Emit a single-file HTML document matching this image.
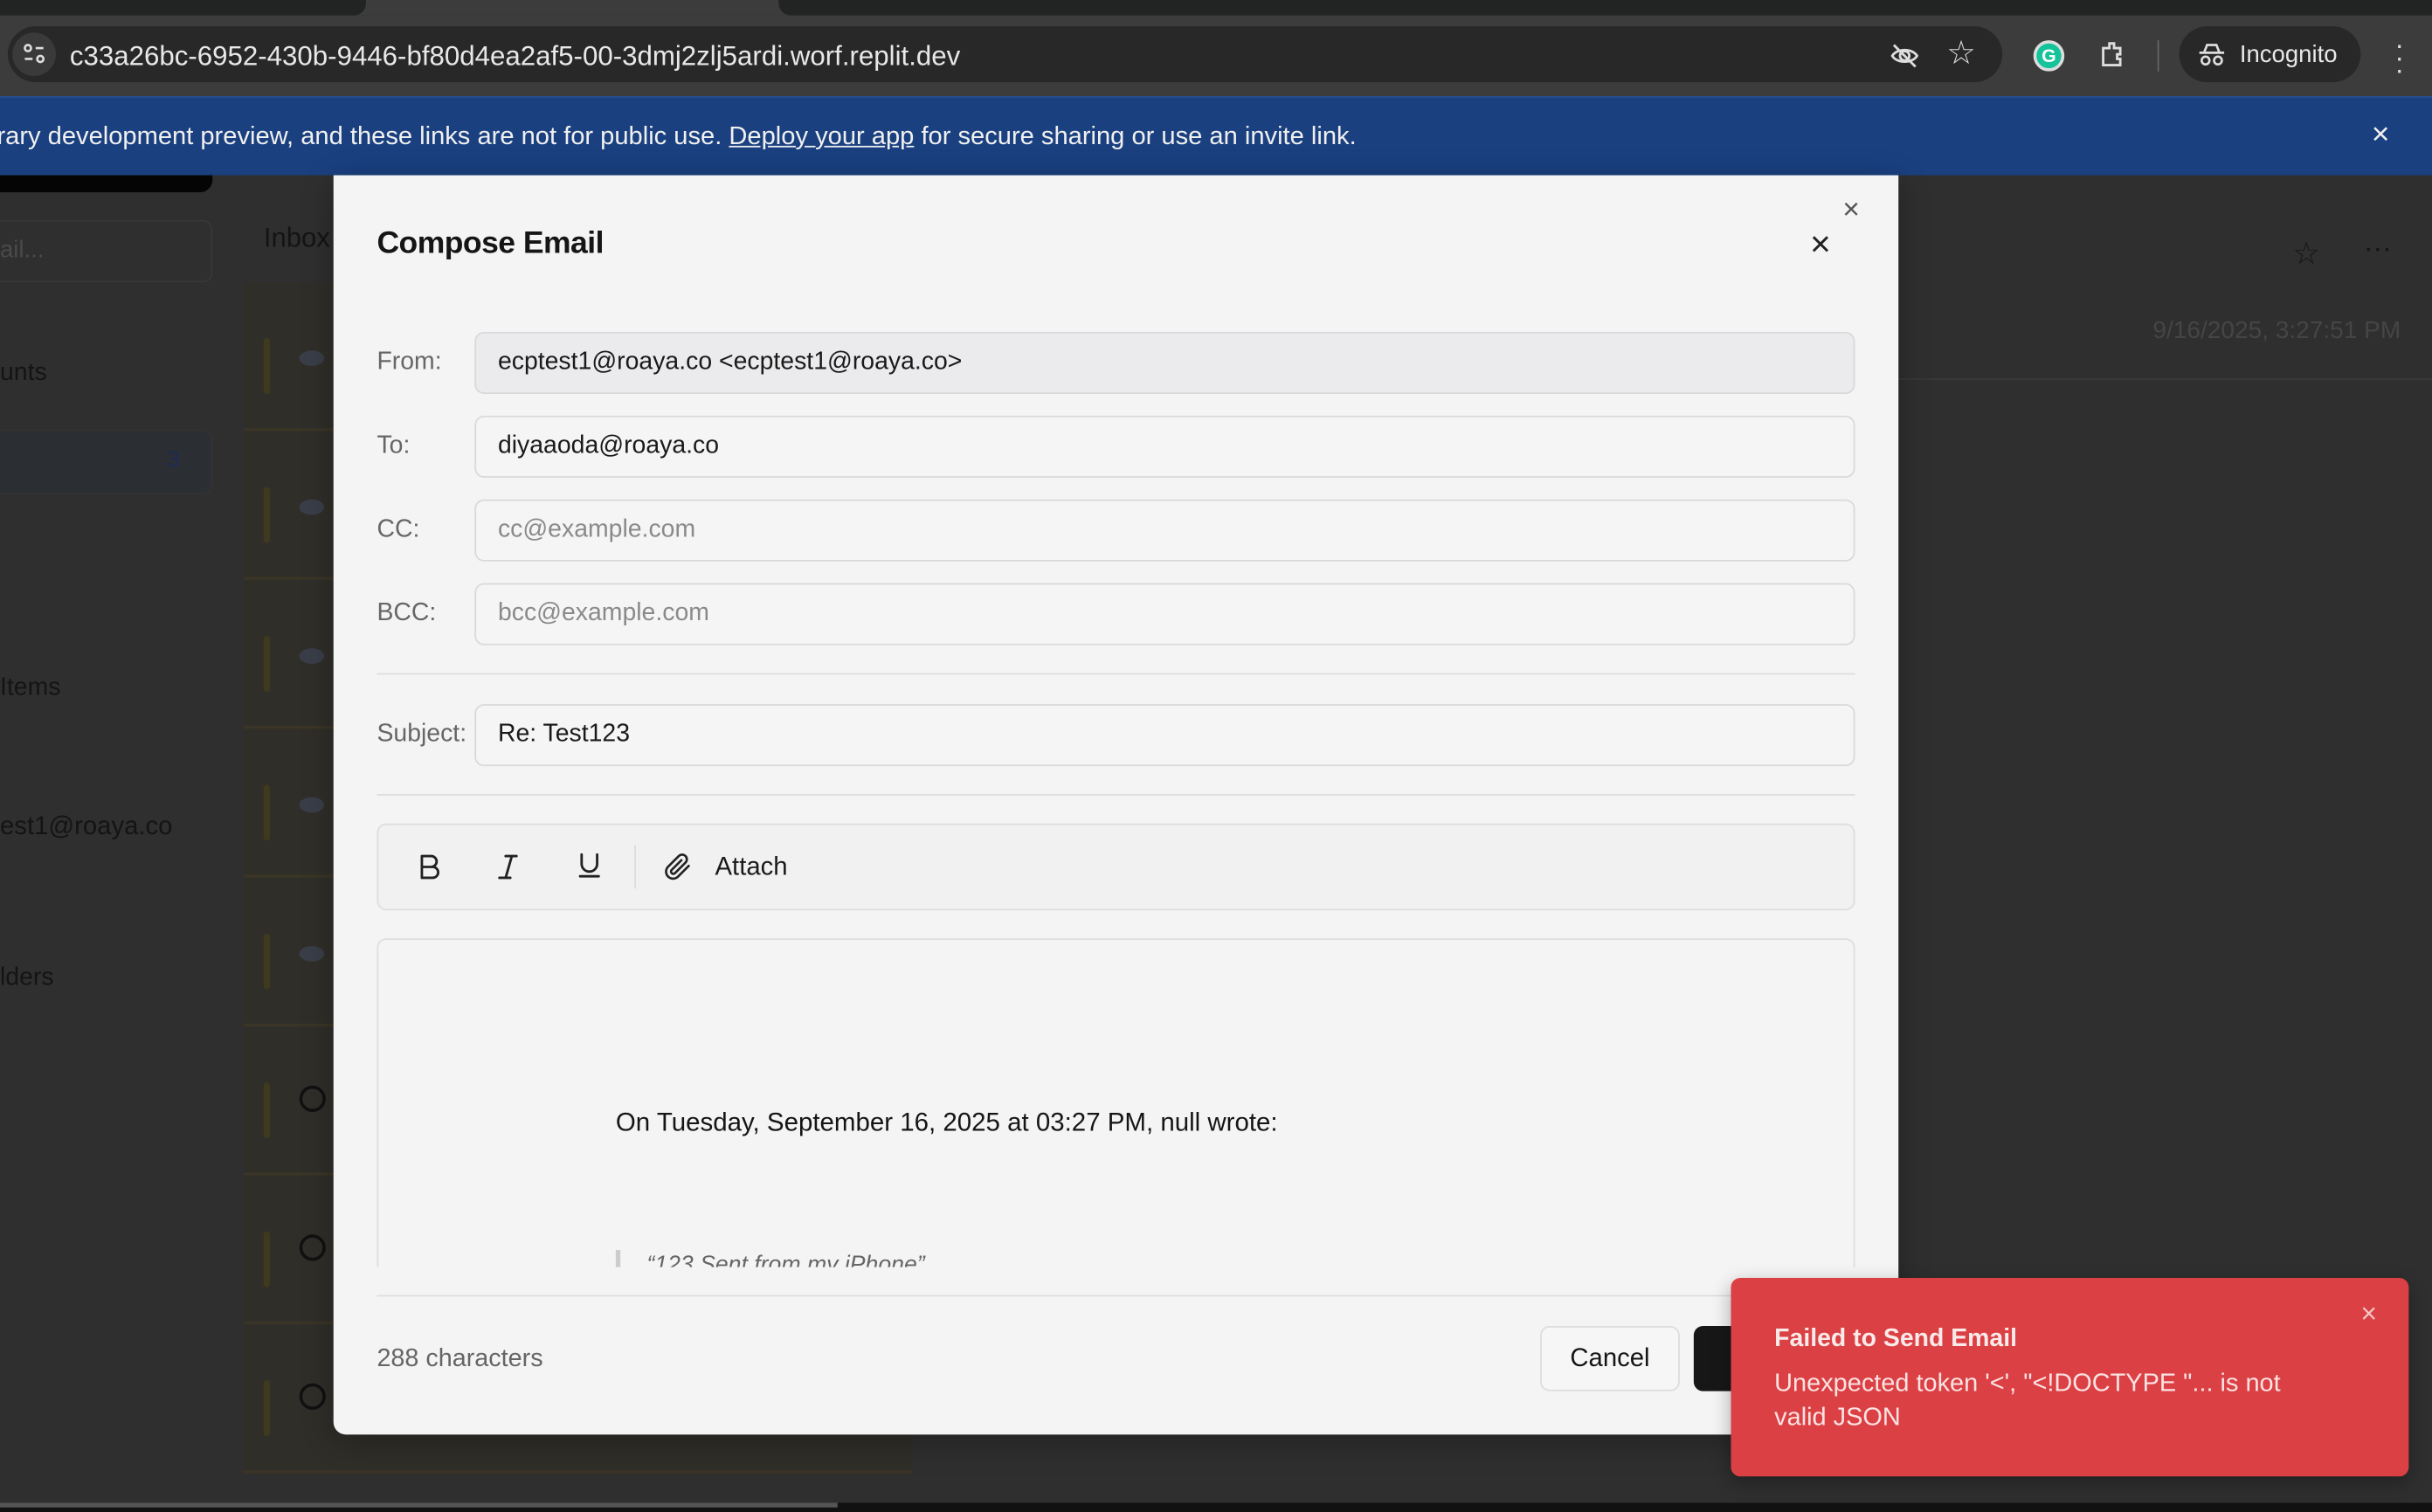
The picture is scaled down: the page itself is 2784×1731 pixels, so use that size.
<!DOCTYPE html>
<html><head><meta charset="utf-8"><style>
*{box-sizing:border-box;margin:0;padding:0}
html,body{width:2784px;height:1730px;overflow:hidden;background:#1e1e1e}
#w{position:absolute;left:0;top:0;width:1568px;height:975px;transform:scale(1.77551);transform-origin:0 0;font-family:"Liberation Sans",sans-serif;background:#2f2f2f;overflow:hidden}
.a{position:absolute}
.inp{position:absolute;left:306px;width:890px;height:40px;border:1px solid #d9d9dc;border-radius:6px;background:#f5f5f5;font-size:16px;color:#1a1a1a;padding:10px 14px}
.lbl{position:absolute;left:243px;font-size:16px;color:#666}
.ph{color:#8a8a8a}
.row{position:absolute;left:157px;width:431px;height:96px;background:#302e29;border-bottom:2px solid #3a3526}
.bar{position:absolute;left:13px;top:36px;width:4px;height:36px;background:#3f3a1e;border-radius:2px}
.dot{position:absolute;left:36px;top:44px;width:16px;height:10px;border-radius:50%;background:#3a3e48}
</style></head><body><div id="w">
<div class="a" style="left:0;top:0;width:1568px;height:10px;background:#3c3c3c"></div>
<div class="a" style="left:0;top:0;width:236px;height:10px;background:#222423;border-radius:0 0 8px 0"></div>
<div class="a" style="left:502px;top:0;width:1066px;height:10px;background:#222423;border-radius:0 0 0 8px"></div>
<div class="a" style="left:0;top:10px;width:1568px;height:52px;background:#3c3c3c"></div>
<div class="a" style="left:5px;top:17px;width:1286px;height:36px;background:#282828;border-radius:18px"></div>
<div class="a" style="left:8px;top:21px;width:28px;height:28px;background:#3a3a3a;border-radius:14px"></div>
<svg class="a" style="left:14px;top:27px" width="16" height="16" viewBox="0 0 16 16" fill="none" stroke="#ddd" stroke-width="1.5"><circle cx="4" cy="4" r="2"/><path d="M9 4h5M2 11h5"/><circle cx="12" cy="11" r="2"/></svg>
<div class="a" style="left:45px;top:26px;font-size:17.6px;color:#e8e8e8">c33a26bc-6952-430b-9446-bf80d4ea2af5-00-3dmj2zlj5ardi.worf.replit.dev</div>
<svg class="a" style="left:1218px;top:26px" width="20" height="20" viewBox="0 0 20 20" fill="none" stroke="#ddd" stroke-width="1.6"><path d="M2 10c3-5 13-5 16 0-3 5-13 5-16 0z"/><circle cx="10" cy="10" r="3"/><path d="M3 3l14 14"/></svg>
<div class="a" style="left:1255px;top:22px;font-size:21px;color:#ddd">☆</div>
<div class="a" style="left:1311px;top:26px;width:20px;height:20px;border-radius:10px;background:#15c39a;border:2px solid #ddd;color:#fff;font-size:12px;font-weight:bold;text-align:center;line-height:16px">G</div>
<svg class="a" style="left:1352px;top:25px" width="20" height="20" viewBox="0 0 20 20" fill="none" stroke="#ddd" stroke-width="1.6"><path d="M4 6h4V3h3v3h4v4h-2v3h2v4H4z"/></svg>
<div class="a" style="left:1391px;top:26px;width:1px;height:20px;background:#666"></div>
<div class="a" style="left:1405px;top:17px;width:117px;height:36px;background:#282828;border-radius:18px"></div>
<svg class="a" style="left:1417px;top:27px" width="18" height="16" viewBox="0 0 18 16" fill="none" stroke="#ddd" stroke-width="1.5"><path d="M1 7h16M4 7l2-5h6l2 5"/><circle cx="5" cy="12" r="2.5"/><circle cx="13" cy="12" r="2.5"/></svg>
<div class="a" style="left:1444px;top:27px;font-size:15.5px;color:#e8e8e8">Incognito</div>
<div class="a" style="left:1544px;top:25px;width:4px;color:#ddd;font-size:18px;line-height:8px">·<br>·<br>·</div>
<div class="a" style="left:0;top:62px;width:1568px;height:51px;background:#1a4080;border-top:1px solid #2b4f8e"></div>
<div class="a" style="left:-2px;top:79px;font-size:16.4px;color:#f0f0f0;white-space:nowrap">rary development preview, and these links are not for public use. <u>Deploy your app</u> for secure sharing or use an invite link.</div>
<div class="a" style="left:1529px;top:76px;font-size:20px;color:#eee">×</div>
<div class="a" style="left:0;top:113px;width:137px;height:11px;background:#050505;border-radius:0 0 8px 0"></div>
<div class="a" style="left:-10px;top:142px;width:147px;height:40px;border:1px solid #383838;border-radius:6px"></div>
<div class="a" style="left:0;top:153px;font-size:15.5px;color:#4a4a4a">ail...</div>
<div class="a" style="left:0;top:232px;font-size:16px;color:#141414">unts</div>
<div class="a" style="left:-10px;top:277px;width:147px;height:42px;background:#2b2e33;border:1px solid #333;border-radius:6px"></div>
<div class="a" style="left:108px;top:288px;font-size:14px;color:#1c2b55">3</div>
<div class="a" style="left:0;top:435px;font-size:16px;color:#141414">Items</div>
<div class="a" style="left:0;top:524px;font-size:16.5px;color:#141414">est1@roaya.co</div>
<div class="a" style="left:0;top:622px;font-size:16px;color:#141414">lders</div>
<div class="a" style="left:157px;top:113px;width:431px;height:862px;background:#2f2f2f"></div>
<div class="a" style="left:170px;top:143px;font-size:17.5px;color:#141414">Inbox</div>
<div class="row" style="top:182px"><div class="bar"></div><div class="dot"></div></div>
<div class="row" style="top:278px"><div class="bar"></div><div class="dot"></div></div>
<div class="row" style="top:374px"><div class="bar"></div><div class="dot"></div></div>
<div class="row" style="top:470px"><div class="bar"></div><div class="dot"></div></div>
<div class="row" style="top:566px"><div class="bar"></div><div class="dot"></div></div>
<div class="row" style="top:662px"><div class="bar"></div><div class="a" style="left:36px;top:38px;width:17px;height:17px;border:2px solid #111;border-radius:50%"></div></div>
<div class="row" style="top:758px"><div class="bar"></div><div class="a" style="left:36px;top:38px;width:17px;height:17px;border:2px solid #111;border-radius:50%"></div></div>
<div class="row" style="top:854px"><div class="bar"></div><div class="a" style="left:36px;top:38px;width:17px;height:17px;border:2px solid #111;border-radius:50%"></div></div>
<div class="a" style="left:588px;top:244px;width:980px;height:1px;background:#383838"></div>
<div class="a" style="left:1478px;top:151px;font-size:20px;color:#151515">☆</div>
<div class="a" style="left:1524px;top:150px;font-size:18px;color:#151515">···</div>
<div class="a" style="left:1388px;top:205px;font-size:15.8px;color:#454545">9/16/2025, 3:27:51 PM</div>
<div class="a" style="left:215px;top:113px;width:1009px;height:812px;background:#f4f4f4;border-radius:0 0 8px 8px;box-shadow:0 4px 20px rgba(0,0,0,.3)"></div>
<div class="a" style="left:1188px;top:125px;font-size:19px;color:#555">×</div>
<div class="a" style="left:243px;top:146px;font-size:20px;font-weight:bold;color:#151515;letter-spacing:-0.3px">Compose Email</div>
<div class="a" style="left:1167px;top:144px;font-size:23px;color:#222">×</div>
<div class="lbl" style="top:225px">From:</div>
<div class="inp" style="top:214px;background:#ebebed">ecptest1@roaya.co &lt;ecptest1@roaya.co&gt;</div>
<div class="lbl" style="top:279px">To:</div>
<div class="inp" style="top:268px">diyaaoda@roaya.co</div>
<div class="lbl" style="top:333px">CC:</div>
<div class="inp ph" style="top:322px">cc@example.com</div>
<div class="lbl" style="top:387px">BCC:</div>
<div class="inp ph" style="top:376px">bcc@example.com</div>
<div class="a" style="left:243px;top:434px;width:953px;height:1px;background:#ddd"></div>
<div class="lbl" style="top:465px">Subject:</div>
<div class="inp" style="top:454px">Re: Test123</div>
<div class="a" style="left:243px;top:512px;width:953px;height:1px;background:#ddd"></div>
<div class="a" style="left:243px;top:531px;width:953px;height:56px;background:#f1f1f1;border:1px solid #ddd;border-radius:6px"></div>
<svg class="a" style="left:268px;top:550px" width="18" height="18" viewBox="0 0 18 18" fill="none" stroke="#222" stroke-width="1.6" stroke-linejoin="round"><path d="M4 2h6a3.5 3.5 0 010 7H4zM4 9h7a3.5 3.5 0 010 7H4z"/></svg>
<svg class="a" style="left:319px;top:550px" width="18" height="18" viewBox="0 0 18 18" fill="none" stroke="#222" stroke-width="1.6" stroke-linecap="round"><path d="M7 2h7M3 16h7M11 2L7 16"/></svg>
<svg class="a" style="left:371px;top:549px" width="18" height="18" viewBox="0 0 18 18" fill="none" stroke="#222" stroke-width="1.6" stroke-linecap="round"><path d="M4 2v6a5 5 0 0010 0V2M3 16h12"/></svg>
<div class="a" style="left:409px;top:545px;width:1px;height:28px;background:#ddd"></div>
<svg class="a" style="left:428px;top:550px" width="18" height="18" viewBox="0 0 24 24" fill="none" stroke="#222" stroke-width="2" stroke-linecap="round"><path d="M21.4 11.1l-9.2 9.2a6 6 0 01-8.5-8.5l9.2-9.2a4 4 0 015.7 5.7l-9.2 9.2a2 2 0 01-2.8-2.8l8.5-8.5"/></svg>
<div class="a" style="left:461px;top:550px;font-size:16.5px;color:#1a1a1a">Attach</div>
<div class="a" style="left:243px;top:605px;width:953px;height:230px;border:1px solid #ddd;border-bottom:none;border-radius:6px 6px 0 0;overflow:hidden">
 <div class="a" style="left:153px;top:108px;font-size:16.6px;color:#151515">On Tuesday, September 16, 2025 at 03:27 PM, null wrote:</div>
 <div class="a" style="left:153px;top:200px;width:3px;height:20px;background:#ccc"></div>
 <div class="a" style="left:173px;top:201px;font-size:15px;font-style:italic;color:#666">“123 Sent from my iPhone”</div>
</div>
<div class="a" style="left:243px;top:817px;width:953px;height:18px;background:#f4f4f4"></div>
<div class="a" style="left:243px;top:835px;width:953px;height:1px;background:#ddd"></div>
<div class="a" style="left:243px;top:867px;font-size:16.2px;color:#666">288 characters</div>
<div class="a" style="left:993px;top:855px;width:90px;height:42px;border:1px solid #ddd;border-radius:6px;background:#f6f6f6;font-size:16.5px;color:#151515;text-align:center;line-height:40px">Cancel</div>
<div class="a" style="left:1092px;top:855px;width:60px;height:42px;background:#171717;border-radius:6px"></div>
<div class="a" style="left:1116px;top:824px;width:437px;height:128px;background:#db4044;border-radius:6px;box-shadow:0 4px 12px rgba(0,0,0,.3)"></div>
<div class="a" style="left:1522px;top:837px;font-size:18px;color:#f4c4c4">×</div>
<div class="a" style="left:1144px;top:855px;font-size:16px;font-weight:bold;color:#fbeaea">Failed to Send Email</div>
<div class="a" style="left:1144px;top:881px;width:345px;font-size:16.3px;line-height:22px;color:#fbe3e3">Unexpected token '&lt;', "&lt;!DOCTYPE "... is not valid JSON</div>
<div class="a" style="left:0;top:969px;width:1568px;height:6px;background:#111"></div>
<div class="a" style="left:0;top:969px;width:540px;height:3px;background:#555"></div>
</div></body></html>
